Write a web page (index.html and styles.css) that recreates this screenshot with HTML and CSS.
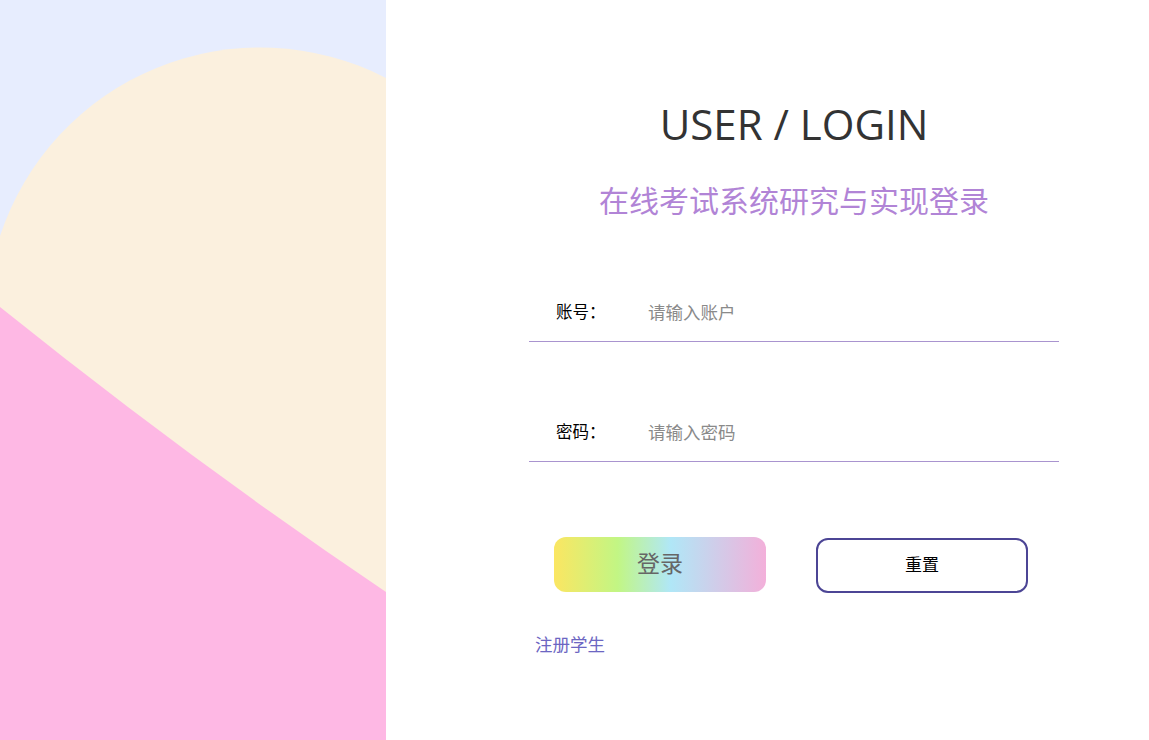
FILE: index.html
```html
<!DOCTYPE html>
<html lang="zh-CN">
<head>
<meta charset="utf-8">
<title>USER / LOGIN</title>
<link rel="stylesheet" href="styles.css">
</head>
<body>
<div class="page">
  <aside class="art">
    <svg class="art-svg" viewBox="0 0 386 740" preserveAspectRatio="none" xmlns="http://www.w3.org/2000/svg">
      <rect x="0" y="0" width="386" height="740" fill="#e7edfe"/>
      <path d="M0,236 A274,274 0 0 1 386,78 L386,740 L0,740 Z" fill="#fbf0de"/>
      <path d="M0,307 Q193,462 386,592 L386,740 L0,740 Z" fill="#feb8e4"/>
    </svg>
  </aside>
  <main class="panel">
    <h1 class="title">USER / LOGIN</h1>
    <h2 class="subtitle">在线考试系统研究与实现登录</h2>
    <form class="form">
      <div class="field">
        <label class="field-label" for="acc">账号：</label>
        <input class="field-input" id="acc" type="text" placeholder="请输入账户">
      </div>
      <div class="field">
        <label class="field-label" for="pwd">密码：</label>
        <input class="field-input" id="pwd" type="password" placeholder="请输入密码">
      </div>
      <div class="actions">
        <button type="button" class="btn btn-login">登录</button>
        <button type="button" class="btn btn-reset">重置</button>
      </div>
      <a class="register" href="#">注册学生</a>
    </form>
  </main>
</div>
</body>
</html>
```

FILE: styles.css
```css
html, body {
  margin: 0;
  padding: 0;
  height: 100%;
  background: #ffffff;
}

body {
  font-family: "Open Sans", "Noto Sans CJK SC", sans-serif;
  color: #333;
}

.page {
  display: flex;
  height: 740px;
  overflow: hidden;
}

.art {
  width: 386px;
  flex: 0 0 386px;
  height: 100%;
}

.art-svg {
  display: block;
  width: 100%;
  height: 100%;
}

.panel {
  flex: 1;
  display: flex;
  flex-direction: column;
  padding-left: 143px;
  padding-top: 96px;
}

.title {
  width: 530px;
  margin: 0;
  font-size: 42px;
  line-height: 56px;
  font-weight: 400;
  text-align: center;
  color: #333;
  font-family: "Open Sans", "Noto Sans CJK SC", sans-serif;
}

.subtitle {
  width: 530px;
  margin: 27px 0 0 0;
  font-size: 30px;
  line-height: 40px;
  font-weight: 400;
  text-align: center;
  color: #b184d6;
  font-family: "Noto Sans CJK SC", sans-serif;
}

.form {
  width: 530px;
  margin-top: 66px;
  display: flex;
  flex-direction: column;
}

.field {
  display: flex;
  align-items: center;
  height: 52px;
  padding-bottom: 4px;
  border-bottom: 1px solid #a994cf;
  font-family: "Noto Sans CJK SC", sans-serif;
}

.field + .field {
  margin-top: 63px;
}

.field-label {
  box-sizing: border-box;
  width: 119px;
  padding-left: 27px;
  font-size: 16.5px;
  color: #000;
}

.field-input {
  flex: 1;
  border: none;
  outline: none;
  background: transparent;
  padding: 0;
  font-size: 17.5px;
  color: #333;
  font-family: "Noto Sans CJK SC", sans-serif;
}

.field-input::placeholder {
  color: #8a8a8a;
}

.actions {
  display: flex;
  gap: 50px;
  padding-left: 25px;
  margin-top: 75px;
}

.btn {
  box-sizing: border-box;
  width: 212px;
  height: 55px;
  border-radius: 12px;
  padding: 0 0 5px 0;
  font-family: "Noto Sans CJK SC", sans-serif;
  cursor: pointer;
}

.btn-login {
  border: none;
  background: linear-gradient(90deg, #fbe662 0%, #c2f684 30%, #b0e7f7 55%, #f3b0da 100%);
  color: #666;
  font-size: 23px;
}

.btn-reset {
  margin-top: 1px;
  border: 2px solid #4c4595;
  background: #fff;
  color: #000;
  font-size: 17px;
}

.register {
  margin-top: 41px;
  margin-left: 6px;
  font-size: 17.5px;
  line-height: 20px;
  color: #6c66c2;
  text-decoration: none;
  font-family: "Noto Sans CJK SC", sans-serif;
  align-self: flex-start;
}
```
